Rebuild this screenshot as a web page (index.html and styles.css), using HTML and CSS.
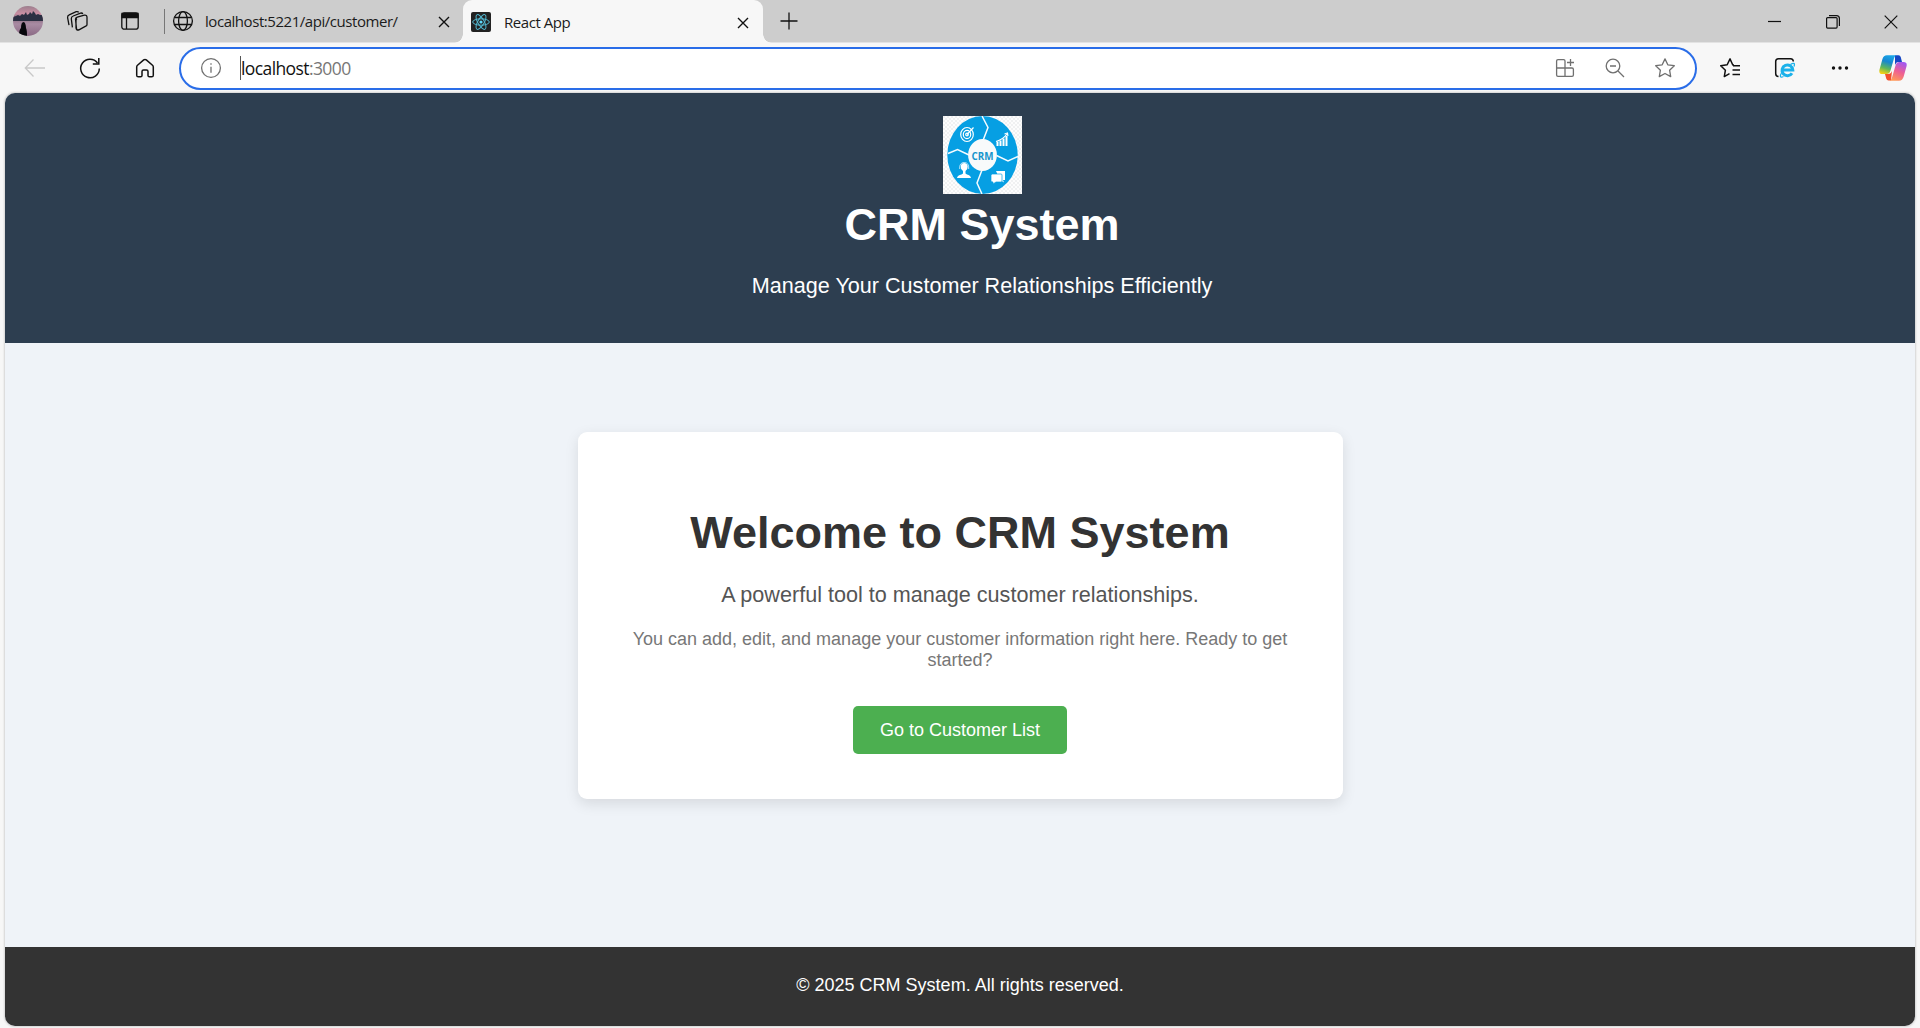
FILE: index.html
```html
<!DOCTYPE html>
<html lang="en">
<head>
<meta charset="utf-8">
<title>React App</title>
<link rel="stylesheet" href="styles.css">
</head>
<body>
<div class="browser">
  <div class="tabstrip">
    <div class="strip-tools">
      <svg class="avatar" width="30" height="30" viewBox="0 0 30 30">
        <defs>
          <clipPath id="face"><circle cx="15" cy="15" r="15"/></clipPath>
          <linearGradient id="dusk" x1="0" y1="0" x2="0" y2="1"><stop offset="0" stop-color="#9c7f8e"/><stop offset=".25" stop-color="#c98fa3"/><stop offset=".4" stop-color="#8a6d80"/><stop offset=".6" stop-color="#a98ba3"/><stop offset="1" stop-color="#8b6a85"/></linearGradient>
        </defs>
        <g clip-path="url(#face)">
          <rect width="30" height="30" fill="url(#dusk)"/>
          <path d="M0 11l3-1 2-1 2 1 2-2 2 1 2-3 1 3 2-1 1-2 2 2 1-3 2 2 1 2 2-1 2 1 3 0v6H0z" fill="#2b2f42"/>
          <path d="M6 30c0-5 1-7 2-8 0-4 1-6 2.500-6s2.500 3 2.500 6c1 2 1 5 1 8z" fill="#07070c"/>
        </g>
      </svg>
      <svg class="icon" viewBox="0 0 24 24"><path d="M9.500 9.500q.3-1.500 1.800-1.900l7-2q2.700-.5 2.700 2v7.200q0 1.200-1.300 1.800l-6.700 3.700q-2 .7-2.500-1.300z M11 9q-1 .6-1 1.900v7.400q.4 3 3 1.800M6.400 17.800L5.300 9.200Q5.200 7 7.200 6.400L14.500 3.500q1.800-.4 2.300.8M3 15.500L1.600 8q-.2-2 1.600-2.700l7-3.200q1.800-.5 2.500.7" transform="translate(0 .6)"/></svg>
      <svg class="icon" viewBox="0 0 24 24"><rect x="3.800" y="3.800" width="16.400" height="16.400" rx="2.500"/><path d="M4 4.500h16v4H4z" fill="#111"/><path d="M8.500 8v12"/></svg>
    </div>
    <div class="tab tab-idle">
      <svg class="icon" viewBox="0 0 24 24"><circle cx="12" cy="12" r="9.400"/><ellipse cx="12" cy="12" rx="4.400" ry="9.400"/><path d="M3.500 8.500h17M3.500 15.500h17"/></svg>
      <span class="tab-title">localhost:5221/api/customer/</span>
      <svg class="close" viewBox="0 0 12 12"><path d="M1 1l10 10M11 1L1 11"/></svg>
    </div>
    <div class="tab tab-active">
      <svg class="favicon" viewBox="0 0 20 20"><rect width="20" height="20" rx="2" fill="#222"/><g fill="none" stroke="#53b9d1" stroke-width="1"><ellipse cx="10" cy="10" rx="8.300" ry="3.200"/><ellipse cx="10" cy="10" rx="8.300" ry="3.200" transform="rotate(60 10 10)"/><ellipse cx="10" cy="10" rx="8.300" ry="3.200" transform="rotate(120 10 10)"/></g><circle cx="10" cy="10" r="1.600" fill="#61dafb"/></svg>
      <span class="tab-title">React App</span>
      <svg class="close" viewBox="0 0 12 12"><path d="M1 1l10 10M11 1L1 11"/></svg>
    </div>
    <svg class="new-tab" viewBox="0 0 18 18"><path d="M9 .5v17M.5 9h17"/></svg>
    <div class="window-buttons">
      <svg viewBox="0 0 14 14"><path d="M0 6.500h13"/></svg>
      <svg viewBox="0 0 14 14"><rect x=".6" y="2.600" width="10.500" height="10.500" rx="1"/><path d="M3 .6h7.500q2.900 0 2.900 2.900v7.500"/></svg>
      <svg viewBox="0 0 14 14"><path d="M.7.700l12.600 12.600M13.300.700L.7 13.300"/></svg>
    </div>
  </div>

  <div class="toolbar">
    <div class="nav-buttons">
      <svg class="icon muted" viewBox="0 0 24 24"><path d="M22 12H2.500M10.500 3.500L2.300 12l8.200 8.500"/></svg>
      <svg class="icon" viewBox="0 0 24 24"><path d="M21.300 12.600A9.300 9.300 0 1 1 19.500 7M20.800 2v6h-6" stroke-width="1.500"/></svg>
      <svg class="icon" viewBox="0 0 24 24"><path d="M3.700 11q0-1 .8-1.700l6.200-5.400q1.300-1 2.600 0l6.200 5.400q.8.700.8 1.700v8.200q0 1.600-1.600 1.600h-2.300q-1.400 0-1.400-1.400v-3.900q0-1.500-1.500-1.500h-3q-1.500 0-1.500 1.500v3.900q0 1.400-1.400 1.400H5.300q-1.600 0-1.600-1.600z" stroke-width="1.500"/></svg>
    </div>
    <div class="address">
      <svg class="icon gray" viewBox="0 0 24 24"><circle cx="12" cy="12" r="9.400"/><path d="M12 10.700v6M12 7.200v1.600"/></svg>
      <div class="url"><span class="caret"></span><span class="host">localhost</span><span class="port">:3000</span></div>
      <div class="address-tools">
        <svg class="icon gray" viewBox="0 0 24 24"><path d="M12 12V5q0-1.400-1.400-1.400H5Q3.600 3.600 3.600 5v14q0 1.400 1.400 1.400h14q1.400 0 1.400-1.400v-5.600q0-1.400-1.400-1.400H3.600M12 12v8.400M17.500 3v7M14 6.500h7"/></svg>
        <svg class="icon gray" viewBox="0 0 24 24"><circle cx="10" cy="10" r="6.800"/><path d="M15 15l6 6M7 10h6"/></svg>
        <svg class="icon gray" viewBox="0 0 24 24"><path d="M12 2.900l2.800 5.900 6.500.9-4.700 4.500 1.100 6.400L12 17.500l-5.700 3.100 1.100-6.400-4.700-4.500 6.500-.9z" stroke-linejoin="round"/></svg>
      </div>
    </div>
    <div class="side-tools">
      <svg class="icon" viewBox="0 0 24 24"><path d="M16 9h-1.200L12 2.900 9.200 8.800l-6.500.9 4.700 4.500-1.100 6.400 5.200-2.900M15 9.700h7M14.500 14H22M14.500 18.500H22" stroke-width="1.500" stroke-linejoin="round"/></svg>
      <svg class="icon" viewBox="0 0 24 24"><path d="M5.500 20.500q-2.800 0-2.800-3V5.500q0-2.800 2.800-2.800h12q2.800 0 2.800 2.800" stroke-width="1.500"/><path d="M19 17.200a5.400 5.400 0 1 1 .8-3.200H10" stroke="#1bb1ea" stroke-width="3"/><path d="M8.500 17c-2 3-1.500 5.200 2 3.500M17.500 8.500c3-2 4.800-1.500 3.500 2" stroke="#1bb1ea" stroke-width="1.300"/></svg>
      <svg class="icon dots" viewBox="0 0 24 24"><circle cx="5.500" cy="12" r="1.700"/><circle cx="12" cy="12" r="1.700"/><circle cx="18.500" cy="12" r="1.700"/></svg>
      <svg class="copilot" viewBox="0 0 28 26">
        <defs>
          <linearGradient id="cool" x1=".6" y1="0" x2=".3" y2="1"><stop offset="0" stop-color="#1aa6e8"/><stop offset=".35" stop-color="#1786d0"/><stop offset=".7" stop-color="#5fb75a"/><stop offset="1" stop-color="#f4cf16"/></linearGradient>
          <linearGradient id="warm" x1=".7" y1="0" x2=".3" y2="1"><stop offset="0" stop-color="#a259f0"/><stop offset=".5" stop-color="#ee5f93"/><stop offset="1" stop-color="#ff9a57"/></linearGradient>
        </defs>
        <path d="M16 .3h3.500q1.800 0 2.300 2L23 7h-4q-2 0-3 3z" fill="#1647c4"/>
        <path d="M12 25.500H9.500q-1.800 0-2.300-2L6 19h4q2 0 3-3z" fill="#f2502f"/>
        <path d="M8 .3h9.500q-1.800.4-2.400 2.700l-3.600 12.500Q10.500 19 7.500 19H3.500Q-.3 19 .4 15L3.300 4.500Q4.500.3 8 .3z" fill="url(#cool)"/>
        <path d="M20 25.700h-9.500q1.800-.4 2.400-2.700l3.600-12.500Q17.500 7 20.500 7h4q3.800 0 3.100 4l-2.900 10.500q-1.200 4.200-4.700 4.200z" fill="url(#warm)"/>
      </svg>
    </div>
  </div>

  <div class="page">
    <header class="page-header">
      <svg class="logo" width="79" height="78" viewBox="0 0 79 78">
        <defs><pattern id="check" width="4" height="4" patternUnits="userSpaceOnUse"><rect width="4" height="4" fill="#fdfdfd"/><path d="M0 0h2v2H0zM2 2h2v2H2z" fill="#f0f1f2"/></pattern></defs>
        <rect width="79" height="78" fill="url(#check)"/>
        <ellipse cx="39.500" cy="39" rx="35.200" ry="39" fill="#069fe3"/>
        <path d="M39 0l6 11.500-5 13M5 37.500l9.500-4L26 39M53.500 39.500L65 45l10-4.500M39 54l-5 13 5 11" fill="none" stroke="#f4fbff" stroke-width="1.500"/>
        <ellipse cx="39.500" cy="39" rx="14.400" ry="16" fill="#f8fafb"/>
        <text x="28.500" y="43.500" textLength="22" lengthAdjust="spacingAndGlyphs" class="logo-text">CRM</text>
        <g fill="none" stroke="#fff" stroke-width="1.200"><ellipse cx="24" cy="18.500" rx="6.300" ry="7"/><ellipse cx="24" cy="18.500" rx="3.700" ry="4.100"/><circle cx="24" cy="18.500" r="1.300"/><path d="M24 18.500l6.500-7M53 25.500q7-2 11-7.500M61.500 18l3-1 .4 3"/></g>
        <path d="M53.500 25.500h2V30h-2zM56.500 24.500h2V30h-2zM59.500 22.500h2V30h-2zM62.500 20h2V30h-2z" fill="#fff"/>
        <path d="M14 62q.5-3 4.500-3.500l1.500-1v-2.500q-2.500-1.500-2.300-4.500Q18 47 21.200 47t3.500 3.500q.2 3-2.200 4.500v2.500l1.500 1q3.500.5 4 3.500z" fill="#fff"/><path d="M16.700 53q-.5-6.500 4.500-6.500t4.500 6.500" fill="none" stroke="#bde6f9"/>
        <path d="M53 55h9v9h-2l1 2.500-4-2.500" fill="#fff"/><path d="M49 58h9q1 0 1 1v6q0 1-1 1h-5l-3 2v-2q-2 0-2-1v-6z" fill="#fff" stroke="#069fe3" stroke-width=".7"/>
      </svg>
      <h1 class="brand">CRM System</h1>
      <p class="tagline">Manage Your Customer Relationships Efficiently</p>
    </header>
    <main class="content">
      <section class="card">
        <h1 class="welcome">Welcome to CRM System</h1>
        <p class="lead">A powerful tool to manage customer relationships.</p>
        <p class="detail">You can add, edit, and manage your customer information right here. Ready to get started?</p>
        <button class="cta">Go to Customer List</button>
      </section>
    </main>
    <footer class="page-footer">© 2025 CRM System. All rights reserved.</footer>
  </div>
</div>
</body>
</html>
```
FILE: styles.css
```css
* { box-sizing: border-box; }

body {
  margin: 0;
  background: #f7f7f7;
  font-family: "Liberation Sans", Arial, sans-serif;
  overflow: hidden;
}

h1, p { margin: 0; }
svg { display: block; flex: none; fill: none; stroke: none; }

.browser {
  width: 1920px;
  height: 1028px;
  display: flex;
  flex-direction: column;
}

/* Tab strip */
.tabstrip {
  height: 43px;
  display: flex;
  background: #cdcdcd;
  border-bottom: 1px solid #e3e3e3;
}
.icon { width: 24px; height: 24px; stroke: #111; stroke-width: 1.3; }
.icon.gray { stroke: #707070; }
.icon.muted { stroke: #c9c9c9; }
.icon.dots { fill: #111; stroke: none; }

.strip-tools {
  width: 165px;
  display: flex;
  align-items: center;
  padding-left: 13px;
  background: linear-gradient(#777, #777) right 9px / 1px 25px no-repeat;
}
.strip-tools .icon { margin-left: 23px; }
.strip-tools .icon + .icon { margin-left: 28px; }

.tab { display: flex; align-items: center; }
.tab-title {
  flex: 1;
  font: 15px/20px "Open Sans", "Noto Sans", sans-serif;
  letter-spacing: -0.45px;
  color: #1b1b1b;
  white-space: nowrap;
}
.tab-idle { width: 298px; padding: 0 13px 0 6px; gap: 10px; }
.tab-idle .icon { margin-right: 0; }
.tab-active {
  position: relative;
  width: 300px;
  height: 43px;
  padding: 0 14px 0 8px;
  gap: 13px;
  background: #f7f7f7;
  border-radius: 9px 9px 0 0;
}
.tab-active::before,
.tab-active::after {
  content: "";
  position: absolute;
  bottom: 0;
  width: 9px;
  height: 9px;
}
.tab-active::before { left: -9px; background: radial-gradient(circle at 0 0, transparent 8.500px, #f7f7f7 9px); }
.tab-active::after { right: -9px; background: radial-gradient(circle at 100% 0, transparent 8.500px, #f7f7f7 9px); }
.favicon { width: 20px; height: 20px; }
.close { width: 12px; height: 12px; stroke: #111; stroke-width: 1.4; margin-top: 2px; }
.new-tab { width: 18px; height: 18px; margin: 12px 0 0 17px; stroke: #111; stroke-width: 1.3; }

.window-buttons { margin-left: auto; padding: 15px 22px 0 0; display: flex; gap: 44px; }
.window-buttons svg { width: 14px; height: 14px; stroke: #111; stroke-width: 1.2; }

/* Toolbar */
.toolbar { height: 50px; display: flex; align-items: center; }
.nav-buttons { width: 179px; padding-left: 23px; display: flex; gap: 31px; }
.address {
  width: 1518px;
  height: 43px;
  display: flex;
  align-items: center;
  padding: 0 18px;
  background: #fff;
  border: 2.500px solid #2a6de8;
  border-radius: 22px;
}
.url {
  flex: 1;
  display: flex;
  align-items: center;
  margin-left: 17px;
  font: 17.500px/24px "Open Sans", "Noto Sans", sans-serif;
  letter-spacing: -0.6px;
}
.caret { width: 1px; height: 24px; background: #555; }
.host { color: #111; }
.port { color: #777; }
.address-tools { display: flex; gap: 26px; }
.side-tools { flex: 1; display: flex; align-items: center; padding-left: 21px; }
.side-tools .icon { margin-right: 31px; }
.side-tools .dots { margin-right: 27px; }
.copilot { width: 28px; height: 26px; }

/* Web page */
.page {
  width: 1910px;
  height: 933px;
  margin-left: 5px;
  display: flex;
  flex-direction: column;
  overflow: hidden;
  border-radius: 10px;
  background: #eff3f8;
  box-shadow: 0 0 2px 1px rgba(0, 0, 0, 0.14);
}
.page-header {
  height: 250px;
  display: flex;
  flex-direction: column;
  align-items: center;
  padding: 23px 0 0 44px;
  background: #2d3e50;
  color: #fff;
}
.brand { margin-top: 5px; font-size: 45px; line-height: 52px; }
.tagline { margin-top: 22px; font-size: 21.600px; line-height: 25px; }
.logo-text { font: bold 11px "Open Sans", sans-serif; fill: #1795cc; }

.content { flex: 1; display: flex; justify-content: center; align-items: flex-start; padding-top: 89px; }
.card {
  width: 765px;
  height: 367px;
  display: flex;
  flex-direction: column;
  align-items: center;
  padding: 75px 45px 45px;
  background: #fff;
  border-radius: 9px;
  box-shadow: 0 4.500px 13.500px rgba(0, 0, 0, 0.1);
  text-align: center;
}
.welcome { font-size: 45px; line-height: 52px; color: #333; }
.lead { margin-top: 23px; font-size: 21.600px; line-height: 25px; color: #555; }
.detail { margin-top: 22px; font-size: 18px; line-height: 21px; color: #777; }
.cta {
  width: 214px;
  height: 48px;
  margin-top: 35px;
  padding: 0;
  border: 0;
  border-radius: 5px;
  background: #4caf50;
  color: #fff;
  font: 18px/21px "Liberation Sans", Arial, sans-serif;
}
.page-footer {
  height: 79px;
  padding-top: 28px;
  background: #333;
  color: #fff;
  font-size: 18px;
  line-height: 21px;
  text-align: center;
}
```
